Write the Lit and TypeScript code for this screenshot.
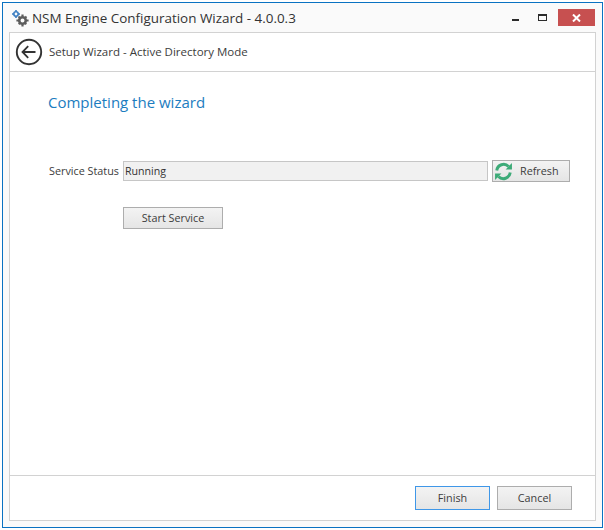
import { LitElement, html, css } from "lit";
import { customElement } from "lit/decorators.js";

@customElement("app-root")
export class AppRoot extends LitElement {
  static styles = css`
    :host {
      display: block;
      width: 604px;
      height: 530px;
      box-sizing: border-box;
      padding: 2px 1px 2px 2px;
      background: #fff;
      font-family: "Open Sans", "Noto Sans", sans-serif;
      color: #333;
    }
    .window {
      box-sizing: border-box;
      height: 100%;
      border: 1px solid #0a72c2;
      background: #fafafa;
      display: flex;
      flex-direction: column;
      padding: 0 6px 6px 6px;
    }
    .titlebar {
      height: 29px;
      flex: none;
      display: flex;
      align-items: center;
    }
    .appicon { width: 18px; height: 18px; margin: 0 3px 0 2px; flex: none; }
    .title { font-size: 13.45px; color: #333; white-space: nowrap; }
    .controls { margin-left: auto; display: flex; align-items: flex-start; align-self: flex-start; margin-top: 6px; }
    .ctl { width: 16px; height: 17px; display: flex; align-items: center; justify-content: center; }
    .min { margin-right: 11px; padding-top: 7px; height: 8px; }
    .minbar { width: 7px; height: 2px; background: #2b2b2b; display: block; }
    .max { margin-right: 8px; }
    .close {
      width: 37px; height: 17px; background: #c75050;
      display: flex; align-items: center; justify-content: center; margin-right: 1px;
    }
    .panel {
      flex: 1;
      background: #fff;
      border: 1px solid #d2d2d2;
      display: flex;
      flex-direction: column;
      min-height: 0;
    }
    .header {
      height: 38px;
      flex: none;
      border-bottom: 1px solid #d2d2d2;
      display: flex;
      align-items: center;
      padding-left: 5px;
      gap: 6px;
    }
    .back { width: 28px; height: 28px; flex: none; }
    .crumb { font-size: 11.5px; color: #3c3c3c; white-space: nowrap; padding-bottom: 2px; }
    .body {
      flex: 1;
      padding: 19px 22px 0 38px;
      min-height: 0;
    }
    h1 {
      margin: 0;
      font-size: 15px;
      font-weight: 400;
      color: #1c7dbf;
      line-height: 22px;
    }
    .row {
      margin-top: 47px;
      display: flex;
      align-items: center;
      height: 22px;
    }
    .label { width: 74px; margin-left: 1px; padding-bottom: 2px; flex: none; font-size: 10.8px; color: #3c3c3c; white-space: nowrap; }
    .field {
      width: 365px;
      height: 20px;
      box-sizing: border-box;
      flex: none;
      background: #f1f1f1;
      border: 1px solid #c6c6c6;
      font-size: 10.6px;
      line-height: 18px;
      padding-left: 1px;
      color: #333;
    }
    .btn {
      box-sizing: border-box;
      font: inherit;
      font-size: 10.8px;
      color: #3c3c3c;
      background: linear-gradient(#f3f3f3, #e5e5e5);
      border: 1px solid #adadad;
      padding: 0 0 2px;
      display: flex;
      align-items: center;
      justify-content: center;
    }
    .refresh {
      width: 78px;
      height: 22px;
      margin-left: 4px;
      justify-content: flex-start;
      padding: 0 0 0 1px;
      gap: 7px;
    }
    .refresh svg { width: 19px; height: 19px; flex: none; }
    .refresh span { padding-bottom: 2px; }
    .start {
      width: 100px;
      height: 22px;
      margin: 25px 0 0 75px;
    }
    .footer {
      height: 44px;
      flex: none;
      border-top: 1px solid #d2d2d2;
      display: flex;
      align-items: center;
      justify-content: flex-end;
      gap: 7px;
      padding: 0 23px 0 0;
    }
    .footer .btn { width: 75px; height: 24px; }
    .primary { border-color: #3f97e8; }
  `;

  render() {
    return html`
      <div class="window">
        <div class="titlebar">
          <svg class="appicon" viewBox="0 0 18 18">
            <g fill="#3a7cc0">
              <circle cx="5" cy="5" r="2.2" fill="none" stroke="#3a7cc0" stroke-width="1.6" />
              <path d="M4.2 1h1.6v1.4H4.2zM4.2 7.6h1.6V9H4.2zM1 4.2h1.4v1.6H1zM7.6 4.2H9v1.6H7.6z" />
            </g>
            <g fill="#5c5c5c">
              <circle cx="11.5" cy="11.5" r="3.3" fill="none" stroke="#5c5c5c" stroke-width="2.6" />
              <path d="M10.4 5.4h2.2v2.2h-2.2zM10.4 15.4h2.2v2.2h-2.2zM5.4 10.4h2.2v2.2H5.4zM15.4 10.4h2.2v2.2h-2.2z" />
              <path d="M6.8 8.2l1.4-1.4 1.6 1.6-1.4 1.4zM13.2 14.6l1.4-1.4 1.4 1.4-1.4 1.4zM14.8 6.8l1.4 1.4-1.6 1.6-1.4-1.4zM8.4 13.2l1.4 1.4-1.4 1.4-1.4-1.4z" />
            </g>
          </svg>
          <span class="title">NSM Engine Configuration Wizard - 4.0.0.3</span>
          <div class="controls">
            <div class="ctl min"><span class="minbar"></span></div>
            <div class="ctl max">
              <svg width="9" height="7" viewBox="0 0 9 7">
                <rect x=".5" y=".5" width="8" height="6" fill="none" stroke="#2b2b2b" />
                <rect x="0" y="0" width="9" height="2" fill="#2b2b2b" />
              </svg>
            </div>
            <div class="close">
              <svg width="9" height="8" viewBox="0 0 9 8">
                <path d="M1 .5l7 7M8 .5l-7 7" stroke="#fff" stroke-width="2" fill="none" />
              </svg>
            </div>
          </div>
        </div>
        <div class="panel">
          <div class="header">
            <svg class="back" viewBox="0 0 28 28">
              <circle cx="14" cy="14" r="12.2" fill="#fff" stroke="#333" stroke-width="1.9" />
              <path d="M7.5 14h13M13.2 8.2L7.5 14l5.7 5.8" fill="none" stroke="#333" stroke-width="1.8" />
            </svg>
            <span class="crumb">Setup Wizard - Active Directory Mode</span>
          </div>
          <div class="body">
            <h1>Completing the wizard</h1>
            <div class="row">
              <span class="label">Service Status</span>
              <div class="field">Running</div>
              <button class="btn refresh">
                <svg viewBox="0 0 18 18">
                  <path d="M2.6 8A6.6 6.6 0 0 1 13.8 4.2" fill="none" stroke="#3dab78" stroke-width="2.8" />
                  <path d="M11 7h6V1z" fill="#3dab78" />
                  <path d="M15.4 10A6.6 6.6 0 0 1 4.2 13.8" fill="none" stroke="#3dab78" stroke-width="2.8" />
                  <path d="M7 11H1v6z" fill="#3dab78" />
                </svg>
                <span>Refresh</span>
              </button>
            </div>
            <button class="btn start">Start Service</button>
          </div>
          <div class="footer">
            <button class="btn primary">Finish</button>
            <button class="btn">Cancel</button>
          </div>
        </div>
      </div>
    `;
  }
}
